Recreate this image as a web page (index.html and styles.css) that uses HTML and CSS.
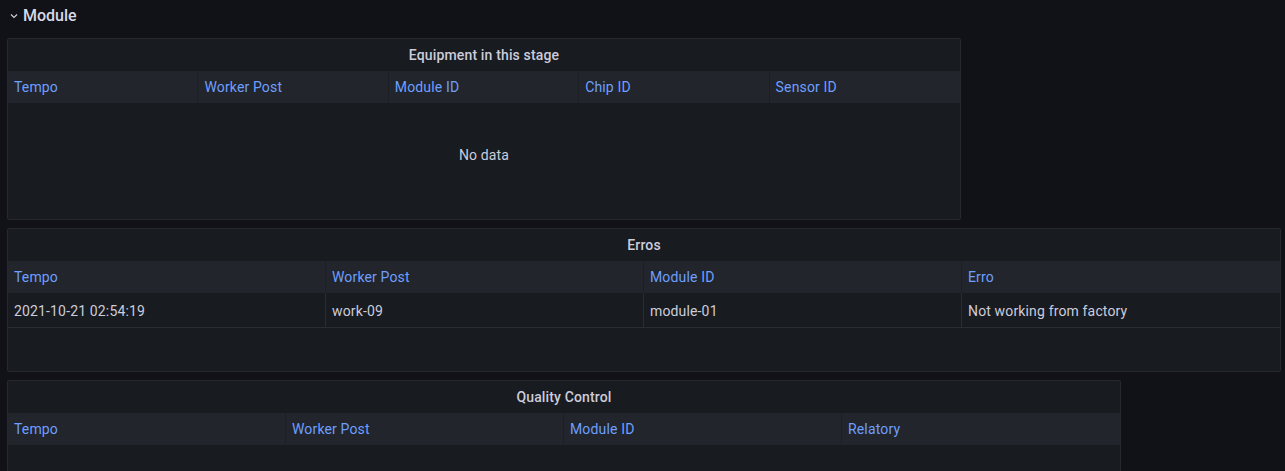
FILE: index.html
```html
<!DOCTYPE html>
<html>
<head>
<meta charset="utf-8">
<link rel="stylesheet" href="styles.css">
</head>
<body>
<div class="dashboard">
  <div class="row-title">
    <svg class="chevron" width="8" height="8" viewBox="0 0 8 8"><path d="M1 2.5 L4 5.5 L7 2.5" fill="none" stroke="#ccccdc" stroke-width="1.2"/></svg>
    <span>Module</span>
  </div>
  <div class="panels">
    <section class="panel panel-equipment">
      <div class="panel-title">Equipment in this stage</div>
      <div class="thead cols-5">
        <div class="th">Tempo</div>
        <div class="th">Worker Post</div>
        <div class="th">Module ID</div>
        <div class="th">Chip ID</div>
        <div class="th">Sensor ID</div>
      </div>
      <div class="no-data">No data</div>
    </section>
    <section class="panel panel-erros">
      <div class="panel-title">Erros</div>
      <div class="thead cols-4">
        <div class="th">Tempo</div>
        <div class="th">Worker Post</div>
        <div class="th">Module ID</div>
        <div class="th">Erro</div>
      </div>
      <div class="trow cols-4">
        <div class="td">2021-10-21 02:54:19</div>
        <div class="td">work-09</div>
        <div class="td">module-01</div>
        <div class="td">Not working from factory</div>
      </div>
    </section>
    <section class="panel panel-quality">
      <div class="panel-title">Quality Control</div>
      <div class="thead cols-4">
        <div class="th">Tempo</div>
        <div class="th">Worker Post</div>
        <div class="th">Module ID</div>
        <div class="th">Relatory</div>
      </div>
    </section>
  </div>
</div>
</body>
</html>
```
FILE: styles.css
```css
html, body {
  margin: 0;
  padding: 0;
  background: #111217;
  overflow: hidden;
}
body {
  font-family: Roboto, "Liberation Sans", sans-serif;
  font-size: 14px;
  letter-spacing: 0.01071em;
  color: #ccccdc;
  width: 1285px;
  height: 471px;
}
.row-title {
  height: 30px;
  display: flex;
  align-items: center;
  padding-left: 10px;
  gap: 5px;
  font-size: 16px;
  font-weight: 500;
  letter-spacing: normal;
  color: #d8d9e6;
}
.chevron {
  margin-top: 1px;
}
.panels {
  display: flex;
  flex-direction: column;
  align-items: flex-start;
  gap: 8px;
  padding: 8px 0 0 7px;
}
.panel {
  background: #181b1f;
  border: 1px solid #25282d;
  border-radius: 2px;
  box-sizing: border-box;
  display: flex;
  flex-direction: column;
}
.panel-equipment { width: 954px; height: 182px; }
.panel-erros { width: 1274px; height: 144px; }
.panel-quality { width: 1114px; height: 92px; border-bottom: none; }
.panel-title {
  height: 32px;
  display: flex;
  align-items: center;
  justify-content: center;
  font-weight: 500;
  color: #ccccdc;
}
.thead, .trow {
  display: grid;
}
.cols-5 { grid-template-columns: repeat(5, 1fr); }
.cols-4 { grid-template-columns: repeat(4, 1fr); }
.thead {
  height: 32px;
  background: #22252b;
}
.th {
  display: flex;
  align-items: center;
  padding-left: 6px;
  color: #6e9fff;
  border-right: 1px solid #1c1f24;
}
.th:last-child { border-right: none; }
.trow {
  height: 34px;
  border-bottom: 1px solid #2a2d33;
}
.td {
  display: flex;
  align-items: center;
  padding: 2px 0 0 6px;
  border-right: 1px solid #2a2d33;
}
.td:last-child { border-right: none; }
.no-data {
  padding-top: 42px;
  text-align: center;
  line-height: 20px;
}
```
